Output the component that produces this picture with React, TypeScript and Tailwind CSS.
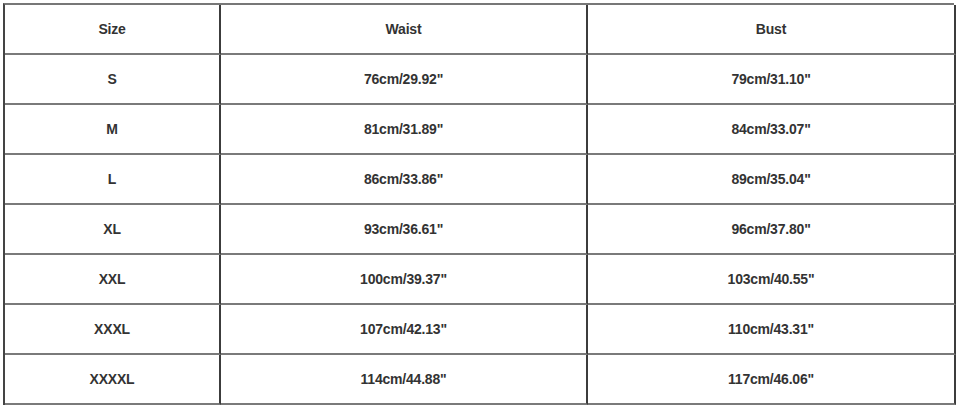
const rows: [string, string, string][] = [
  ['Size', 'Waist', 'Bust'],
  ['S', '76cm/29.92"', '79cm/31.10"'],
  ['M', '81cm/31.89"', '84cm/33.07"'],
  ['L', '86cm/33.86"', '89cm/35.04"'],
  ['XL', '93cm/36.61"', '96cm/37.80"'],
  ['XXL', '100cm/39.37"', '103cm/40.55"'],
  ['XXXL', '107cm/42.13"', '110cm/43.31"'],
  ['XXXXL', '114cm/44.88"', '117cm/46.06"'],
];

export default function App() {
  return (
    <div className="h-[407px] w-[956px] bg-white pl-[3px] pt-[3px] font-['Liberation_Sans',Arial,sans-serif]">
      <div className="grid w-[951px] grid-cols-[216px_367px_368px] border-l-2 border-t-2 border-l-[#444] border-t-[#777]">
        {rows.map((row, i) =>
          row.map((cell, j) => (
            <div
              key={`${i}-${j}`}
              className="flex h-[50px] items-center justify-center border-b-2 border-r-2 border-b-[#7a7a7a] border-r-[#3c3c3c] pt-[1px] text-[14px] font-bold tracking-[-0.2px] text-[#333]"
            >
              {cell}
            </div>
          )),
        )}
      </div>
    </div>
  );
}
